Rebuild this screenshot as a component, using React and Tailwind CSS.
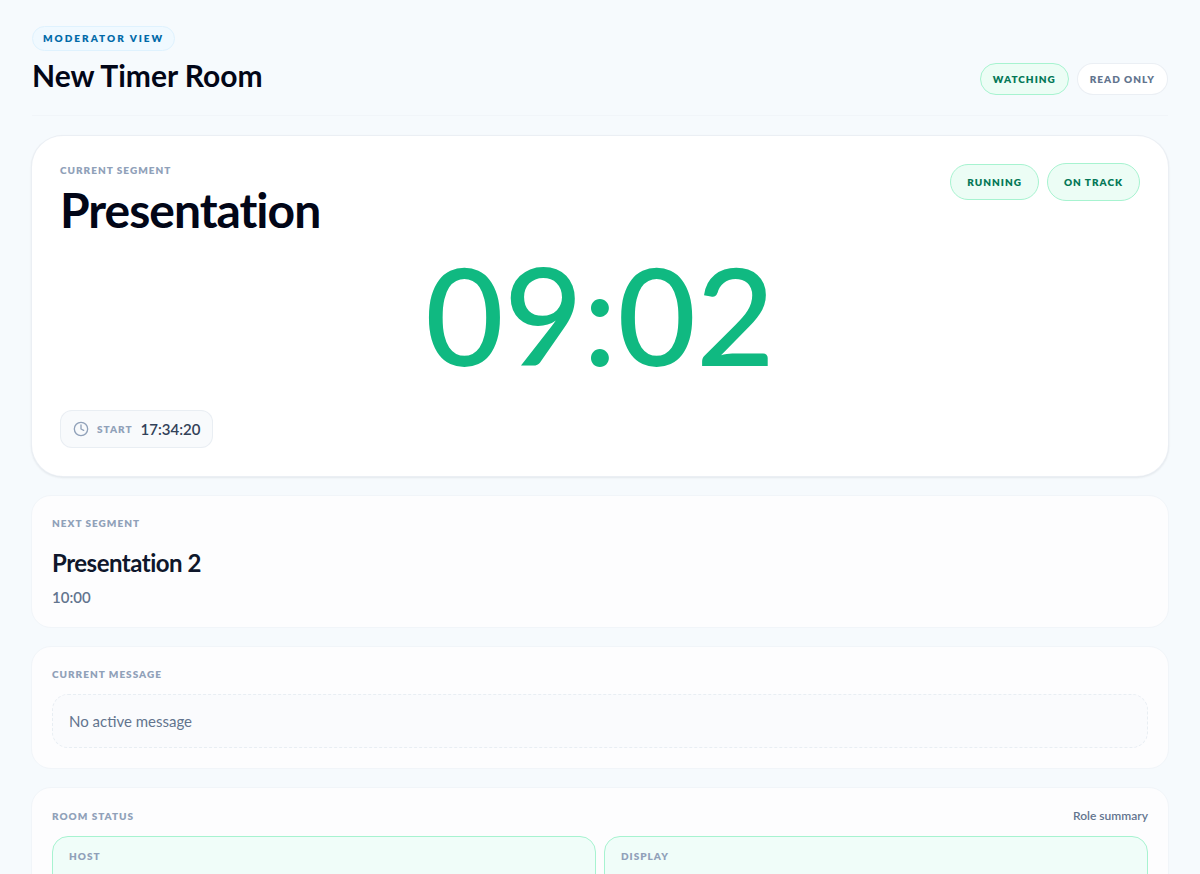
import { Clock } from 'lucide-react';

const room = {
  title: 'New Timer Room',
  segment: 'Presentation',
  remaining: '09:02',
  startedAt: '17:34:20',
  next: { title: 'Presentation 2', duration: '10:00' },
  message: '',
  roles: ['Host', 'Display'],
};

function Label({ as: Tag = 'h2', children }) {
  return (
    <Tag className="text-[10px] leading-[15px] font-extrabold uppercase tracking-[1px] text-slate-400">
      {children}
    </Tag>
  );
}

function Panel({ children }) {
  return (
    <section className="rounded-[20px] border border-slate-100 bg-[#fdfdfe] p-5">
      {children}
    </section>
  );
}

export default function App() {
  return (
    <div className="min-h-screen bg-[#f6fafd] font-['Lato',sans-serif] text-[#020617]">
      <main className="px-8 pt-[26px] pb-8">
        {/* Header */}
        <header className="flex items-end justify-between border-b border-slate-100 pb-5">
          <div>
            <p className="flex h-[25px] w-fit items-center rounded-full border border-sky-100 bg-sky-50 px-[10px] text-[10px] font-extrabold uppercase tracking-[2px] text-sky-700">
              Moderator view
            </p>
            <h1 className="mt-1 text-[30px] leading-10 font-bold">{room.title}</h1>
          </div>
          <div className="flex gap-2 text-[10px] font-extrabold uppercase tracking-[1px]">
            <span className="flex h-8 items-center rounded-full border border-[#a7f3d0] bg-emerald-50 px-3 text-[#047857]">
              Watching
            </span>
            <span className="flex h-8 items-center rounded-full border border-slate-200/70 bg-white px-3 text-slate-500">
              Read only
            </span>
          </div>
        </header>

        <div className="-mx-px mt-[19px] flex flex-col gap-[18px]">
          {/* Current segment */}
          <section className="rounded-[32px] border border-slate-200/70 bg-white p-7 pt-[27px] shadow-[0_1px_2px_rgba(15,23,42,0.08)]">
            <div className="flex items-start justify-between">
              <div>
                <Label as="p">Current segment</Label>
                <h2 className="text-5xl leading-[64px] font-bold tracking-[-1px]">{room.segment}</h2>
              </div>
              <div className="flex items-center gap-2 text-[10px] font-extrabold uppercase tracking-[1px] text-[#047857]">
                <span className="flex h-9 items-center rounded-full border border-[#a7f3d0] bg-emerald-50 px-4">
                  Running
                </span>
                <span className="flex h-[38px] items-center rounded-full border border-[#a7f3d0] bg-emerald-50 px-4">
                  On track
                </span>
              </div>
            </div>

            <div className="mt-0.5 text-center text-[136px] leading-[140px] font-medium tabular-nums text-[#10b981]" role="timer">
              {room.remaining}
            </div>

            <div className="mt-[26px] flex h-[38px] w-fit items-center gap-2 rounded-xl border border-slate-200/70 bg-slate-50 px-3">
              <Clock className="h-4 w-4 text-slate-400" strokeWidth={2} />
              <Label as="span">Start</Label>
              <span className="text-[15px] leading-5 font-semibold tabular-nums text-slate-700">{room.startedAt}</span>
            </div>
          </section>

          {/* Next segment */}
          <Panel>
            <Label>Next segment</Label>
            <p className="mt-4 text-2xl leading-8 font-bold tracking-[-0.5px] text-slate-900">{room.next.title}</p>
            <p className="mt-2 text-[15px] leading-5 font-semibold tabular-nums text-slate-500">{room.next.duration}</p>
          </Panel>

          {/* Current message */}
          <Panel>
            <Label>Current message</Label>
            <p className="mt-3 rounded-2xl border border-dashed border-slate-200/70 bg-slate-50/60 p-4 text-[15px] leading-5 text-slate-500">
              {room.message || 'No active message'}
            </p>
          </Panel>

          {/* Room status */}
          <Panel>
            <div className="flex items-center justify-between">
              <Label>Room status</Label>
              <span className="text-xs leading-4 font-semibold text-slate-500">Role summary</span>
            </div>
            <div className="mt-3 grid grid-cols-2 gap-2">
              {room.roles.map((role) => (
                <div key={role} className="min-h-20 rounded-2xl border border-[#a7f3d0] bg-[#f0fdf9] px-4 py-3">
                  <Label as="h3">{role}</Label>
                </div>
              ))}
            </div>
          </Panel>
        </div>
      </main>
    </div>
  );
}
